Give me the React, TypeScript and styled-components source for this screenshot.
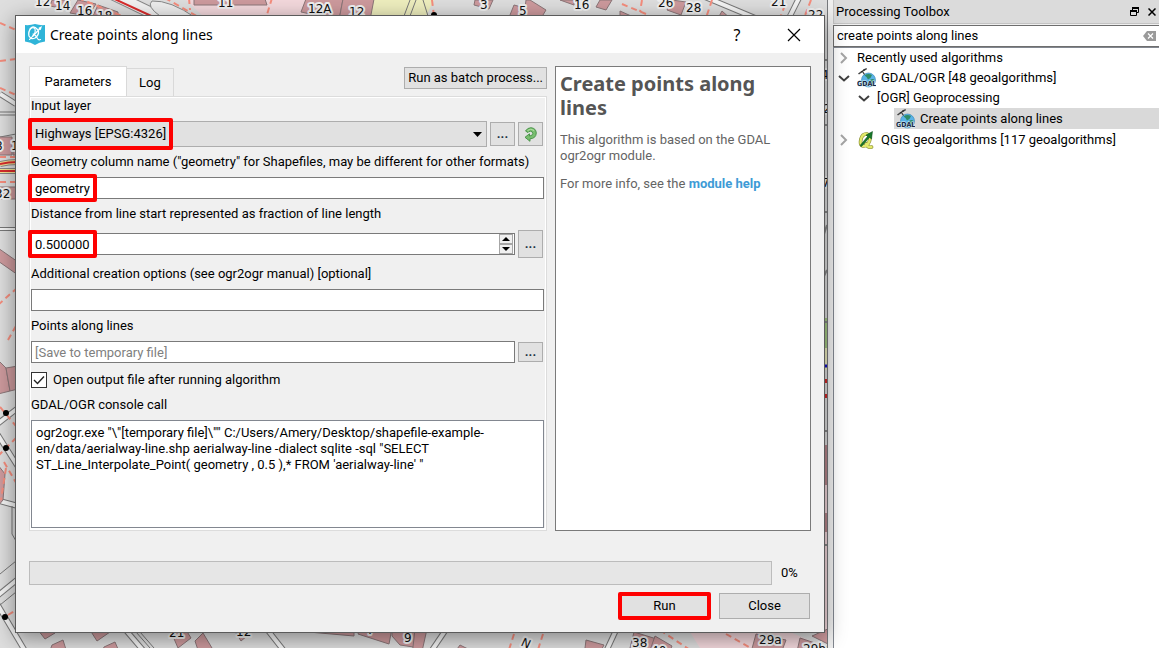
import React from "react";
import styled, { createGlobalStyle, css } from "styled-components";

const uiFont = `Roboto, "DejaVu Sans Condensed", sans-serif`;
const titleFont = `"Noto Sans", "Open Sans", sans-serif`;

const GlobalStyle = createGlobalStyle`
  *, *::before, *::after { box-sizing: border-box; }
  body { margin: 0; font: 13px/16px ${uiFont}; color: #000; background: #dcdcdc; }
  button, input, select, textarea { font: inherit; color: inherit; margin: 0; border-radius: 0; }
`;

const Workspace = styled.div`
  display: flex;
  height: 100vh;
  overflow: hidden;
`;

const MapPane = styled.main`
  position: relative;
  z-index: 1;
  flex: 1;
  min-width: 0;
  border-right: 1px solid #77797c;
`;

const MapCanvas = styled.svg`
  display: block;
  width: 100%;
  height: 100%;
`;

const MapLabel = styled.text`
  font: 12px "DejaVu Sans", sans-serif;
  fill: #111;
  stroke: #f0f0f0;
  stroke-width: 4px;
  stroke-linejoin: round;
  paint-order: stroke;
`;

const Dialog = styled.section`
  position: absolute;
  top: 15px;
  left: 15px;
  right: 2px;
  border: 1px solid #5b5b5b;
  background: #f0f0f0;
  box-shadow: 0 5px 20px rgba(0, 0, 0, 0.42);
`;

const TitleBar = styled.header`
  display: flex;
  align-items: center;
  height: 37px;
  padding: 0 9px;
  background: #fff;
`;

const DialogTitle = styled.h1`
  flex: 1;
  margin: 0 0 0 5px;
  font: 14px/20px ${titleFont};
`;

const CaptionButton = styled.button`
  display: grid;
  place-items: center;
  width: 42px;
  height: 36px;
  padding: 0;
  border: 0;
  background: none;
  font: 16px/20px ${titleFont};
  & + & { margin-left: 15px; }
`;

const DialogBody = styled.form`
  padding: 13px;
`;

const Columns = styled.div`
  display: grid;
  grid-template-columns: minmax(0, 518fr) minmax(0, 256fr);
  gap: 8px;
`;

const TabColumn = styled.div`
  display: flex;
  flex-direction: column;
`;

const TabRow = styled.div`
  display: flex;
  align-items: flex-end;
  height: 30px;
`;

const Tab = styled.button<{ $active?: boolean }>`
  height: ${(p) => (p.$active ? 30 : 28)}px;
  min-width: ${(p) => (p.$active ? 98 : 46)}px;
  padding: 0 12px;
  border: 1px solid #d9d9d9;
  border-bottom: 0;
  background: ${(p) => (p.$active ? "#fff" : "#f0f0f0")};
  & + & { border-left: 0; }
`;

const Push = css`
  border: 1px solid #adadad;
  background: #e1e1e1;
  padding: 0;
`;

const BatchButton = styled.button`
  ${Push}
  align-self: flex-start;
  height: 22px;
  margin: 1px 0 0 auto;
  padding: 0 3px;
`;

const TabPane = styled.div`
  flex: 1;
  padding: 1px 1px 2px;
  border: 1px solid #dcdcdc;
  background: #fff;
`;

const Fields = styled.div`
  display: flex;
  flex-direction: column;
  gap: 7px;
  padding-right: 1px;
  background: #f0f0f0;
`;

const FieldLabel = styled.label`
  height: 16px;
  white-space: nowrap;
`;

const FieldRow = styled.div<{ $height: number }>`
  display: flex;
  align-items: center;
  gap: 3px;
  height: ${(p) => p.$height}px;
`;

const Control = styled.div`
  position: relative;
  flex: 1;
  display: flex;
`;

const TextInput = styled.input`
  width: 100%;
  height: 22px;
  padding: 0 3px;
  border: 1px solid #7a7a7a;
  background: #fff;
  outline: 0;
  appearance: textfield;
  &::placeholder { color: #808080; opacity: 1; }
  &::-webkit-inner-spin-button { appearance: none; margin: 0; }
`;

const Select = styled.select`
  width: 100%;
  height: 26px;
  padding: 0 3px;
  border: 1px solid #adadad;
  background: #e1e1e1;
  appearance: none;
`;

const Caret = styled.svg`
  position: absolute;
  right: 5px;
  top: 11px;
  pointer-events: none;
`;

const SpinButtons = styled.div`
  position: absolute;
  top: 1px;
  right: 2px;
  display: grid;
`;

const SpinButton = styled.button`
  display: grid;
  place-items: center;
  width: 14px;
  height: 10px;
  padding: 0;
  border: 1px solid #a6a6a6;
  background: #f0f0f0;
`;

const ToolButton = styled.button<{ $height: number }>`
  ${Push}
  display: grid;
  place-items: center;
  flex: none;
  width: 25px;
  height: ${(p) => p.$height}px;
  font-weight: bold;
  color: #1c3344;
  &:last-child { margin-right: 1px; }
`;

const Highlight = styled.span<{ $width: number }>`
  position: absolute;
  top: -3px;
  bottom: -3px;
  left: -3px;
  width: ${(p) => p.$width}px;
  border: 4px solid #fe0000;
  border-radius: 2px;
  pointer-events: none;
`;

const CheckRow = styled.label`
  display: flex;
  align-items: center;
  gap: 6px;
  height: 20px;
`;

const Checkbox = styled.input`
  width: 16px;
  height: 16px;
  margin: 0;
  border: 1px solid #333;
  background: #fff;
  appearance: none;
`;

const CheckBoxFrame = styled.span`
  position: relative;
  display: flex;
  svg { position: absolute; inset: 0; }
`;

const Console = styled.textarea`
  display: block;
  width: 100%;
  height: 108px;
  padding: 4px;
  border: 1px solid #828790;
  background: #fff;
  resize: none;
  outline: 0;
`;

const Help = styled.article`
  border: 1px solid #7a7a7a;
  background: #fff;
  padding: 5px 4px;
  color: #646464;
  h2 { margin: 0 0 12px; font: bold 20px/24px ${titleFont}; color: #555; }
  p { margin: 0 0 12px; }
  a { color: #3e9bd6; font-weight: bold; text-decoration: none; }
`;

const ProgressRow = styled.div`
  display: grid;
  grid-template-columns: 1fr 30px;
  align-items: center;
  gap: 9px;
  margin-top: 30px;
`;

const Track = styled.div`
  height: 24px;
  border: 1px solid #bcbcbc;
  background: #e6e6e6;
`;

const Actions = styled.div`
  display: flex;
  justify-content: flex-end;
  gap: 9px;
  padding: 8px 1px 0;
`;

const ActionSlot = styled.div`
  position: relative;
`;

const ActionButton = styled.button`
  ${Push}
  width: 91px;
  height: 26px;
`;

const ActionHighlight = styled.span`
  position: absolute;
  inset: -1px;
  border: 4px solid #fe0000;
  border-radius: 2px;
  pointer-events: none;
`;

const Splitter = styled.div`
  width: 5px;
  background: #f0f0f0;
`;

const Toolbox = styled.aside`
  display: flex;
  flex-direction: column;
  width: 326px;
  background: #fff;
`;

const ToolboxHeader = styled.header`
  display: flex;
  align-items: center;
  gap: 9px;
  height: 24px;
  padding: 0 3px 0 2px;
  border: 1px solid #c3c3c3;
  border-top: 0;
  border-right: 0;
  background: #dbdbdb;
  h2 { flex: 1; margin: 0; font-size: 13px; font-weight: normal; line-height: 16px; }
`;

const DockButton = styled.button`
  display: grid;
  padding: 0;
  border: 0;
  background: none;
`;

const SearchBox = styled.div`
  position: relative;
  display: flex;
  height: 23px;
  padding-top: 1px;
  background: #f0f0f0;
`;

const SearchInput = styled.input`
  flex: 1;
  padding: 0 3px;
  border: 1px solid #6e6e6e;
  border-right: 0;
  background: #fff;
  outline: 0;
`;

const ClearButton = styled(DockButton)`
  position: absolute;
  top: 7px;
  right: 3px;
`;

const Tree = styled.ul`
  flex: 1;
  margin: 0;
  padding: 0;
  border-left: 1px solid #828790;
  border-top: 1px solid #828790;
  list-style: none;
`;

const TreeRow = styled.li<{ $indent: number; $height?: number }>`
  display: flex;
  align-items: center;
  height: ${(p) => p.$height ?? 20}px;
  padding-left: ${(p) => p.$indent}px;
  white-space: nowrap;
`;

const Twisty = styled.svg`
  flex: none;
  margin-right: 5px;
`;

const TreeItem = styled.span<{ $selected?: boolean }>`
  display: flex;
  align-items: center;
  align-self: stretch;
  flex: 1;
  gap: 5px;
  padding-left: 2px;
  background: ${(p) => (p.$selected ? "#d9d9d9" : "transparent")};
`;

const houseNumbers: [string, number, number][] = [
  ["12", 35, 6], ["14", 55, 10], ["16", 77, 15], ["18", 97, 20], ["11", 218, 7], ["12A", 308, 13], ["12", 349, 16],
  ["3", 480, 9], ["5", 519, 15], ["16", 574, 9], ["26", 658, 7], ["28", 686, 12], ["21", 771, 6], ["22", 808, 19],
  ["8", -5, 150], ["1", 11, 150], ["32", -5, 198], ["7", 822, 187], ["4", 821, 79], ["2", 823, 113],
  ["21", 169, 637], ["12", 236, 636], ["7", 367, 634], ["9", 404, 642], ["38", 632, 647], ["40", 651, 655], ["29a", 759, 644], ["29b", 803, 653],
];

const streets = [
  "M0 94L16 104", "M705 -3L760 20", "M800 -4L788 20",
  "M-4 425L18 408", "M-4 432L20 470", "M-4 500L18 506", "M-4 597L18 579", "M-4 602L28 656",
  "M124 628L148 656", "M266 628L288 656", "M447 628L428 656", "M617 628L604 656", "M528 644L520 656",
];

const buildings = [
  "M78 0L70 13L88 16L96 4z", "M52 0L50 6L66 9L70 0z", "M98 5L92 18H118L118 12z",
  "M194 -1V5H267L265 -1z", "M306 -1L301 12L339 20L343 -1z", "M343 -1L339 20H370L374 -1z",
  "M475 0L474 5L489 9L493 0z", "M514 5L508 20H540L546 10L530 0H526L525 8z", "M560 0L574 5V0z", "M600 0L596 7L606 10L612 0z",
  "M672 0L667 10L681 15L686 2z", "M722 11L716 22L732 20z", "M620 11L640 20H620z",
  "M-2 137H12V155H-2z", "M13 140H20V155H13z", "M-2 187H18V199H-2z", "M-2 248L18 262V275L-2 261z",
  "M-2 360L6 368L10 391L-2 394z", "M6 368L18 366V389L10 391z", "M-2 465L5 474L3 500L-2 506z",
  "M38 630L45 639L55 633z", "M90 630L97 641L110 632z", "M52 645L63 640L68 656H48z", "M104 647L115 642L121 656H100z",
  "M172 634L186 630L191 638L178 648z", "M195 641L203 633L212 648L200 656z", "M236 633L241 641L247 636z",
  "M286 630L354 636V628z", "M358 634L389 644L392 628H360z", "M392 636L400 645L420 648V628H392z",
  "M415 629H427L421 656H412z", "M460 645L482 656H452z", "M586 640L604 645L598 656H584z", "M634 632L660 640L650 656H628z",
  "M655 636L672 646L668 656H648z", "M756 634L786 640L780 656H750z", "M800 638L830 648V656H796z", "M812 636L830 628V645z",
];

const footpaths = [
  "M78 -2L132 20", "M165 -2L200 18", "M189 -2L190 10", "M272 -2L266 18", "M432 0L434 16", "M0 23L16 30", "M0 61L16 59",
  "M0 88L16 95", "M0 157H16", "M0 182H16", "M-2 305L16 289", "M8 340L16 326", "M0 407L16 426", "M-2 456L16 438", "M6 468L1 500",
  "M4 462L18 486", "M8 615L16 610", "M622 4L646 14", "M642 0L640 12", "M712 0L706 18", "M785 5L780 18", "M811 0L804 18",
  "M514 634L507 656", "M543 634L536 656", "M660 630L690 650", "M726 634L765 656",
];

const MapArt = () => (
  <MapCanvas viewBox="0 0 827 648" preserveAspectRatio="xMinYMin slice" aria-label="City map">
    <rect width="827" height="648" fill="#dedede" />
    <path d="M186 0H372L366 18H205z M690 632H790L827 648H700z M806 632H827V460H806z" fill="#f3d8dc" />
    <path d="M372 0H434L425 18H366z M812 348H827V370H812z" fill="#eeeebe" />
    <path d="M812 318H827V348H812z" fill="#a5cb84" />
    <g fill="none">
      {streets.map((d) => <path key={d} d={d} stroke="#777" strokeWidth="6" />)}
      {streets.map((d) => <path key={d} d={d} stroke="#f4f4f4" strokeWidth="4" />)}
      <path d="M112 -6L166 20" stroke="#888" strokeWidth="12" />
      <path d="M112 -6L166 20" stroke="#f2f2f2" strokeWidth="10" />
      <path d="M108 -4L160 20" stroke="#d82c2c" strokeWidth="2" />
      <path d="M196 18Q170 0 152 1Q146 6 160 16" fill="#eee" stroke="#888" />
      <path d="M0 164Q8 162 18 162M0 171H18" stroke="#888" strokeWidth="6" />
      <path d="M0 164Q8 162 18 162M0 171H18" stroke="#f3e493" strokeWidth="4" />
      <path d="M0 164Q8 162 18 162M0 171H18" stroke="#d82c2c" strokeWidth="2" />
      <path d="M0 229H16" stroke="#777" strokeWidth="4" />
      <path d="M0 229H16" stroke="#f4f4f4" strokeWidth="2" />
      <path d="M0 112H16M0 115H16M0 137L16 134M0 574L16 561M0 605L16 592M136 632L150 648M140 632L154 648M12 506V534L16 541M410 0L404 16M416 0L410 16M423 0L428 16" stroke="#777" />
      <path d="M822 60H827M822 125H827M822 212H827M822 322H827M822 431H827M822 545H827M827 225L822 240M827 270L822 280" stroke="#888" strokeWidth="2" />
      <path d="M822 366H827" stroke="#1111c8" strokeWidth="3" />
      <path d="M822 381H827M822 396H827" stroke="#d52828" strokeWidth="4" />
    </g>
    {buildings.map((d) => <path key={d} d={d} fill="#cd9a9d" stroke="#8b7678" />)}
    <path d="M822 445H827V485H822z M822 513H827V532H822z" fill="#b9878c" />
    <g fill="none" stroke="#f58d7d" strokeWidth="2" strokeDasharray="6 4">
      {footpaths.map((d) => <path key={d} d={d} />)}
    </g>
    <g fill="#000">
      <circle cx="6" cy="413" r="3" /><circle cx="6" cy="448" r="3" /><circle cx="5" cy="617" r="3" /><circle cx="434" cy="15" r="3" />
    </g>
    {houseNumbers.map(([t, x, y]) => <MapLabel key={t + x} x={x} y={y}>{t}</MapLabel>)}
    <MapLabel transform="translate(532 641) rotate(-155)">N</MapLabel>
  </MapCanvas>
);

const QgisBadge = () => (
  <svg width="20" height="21" viewBox="0 0 20 21" aria-hidden="true">
    <path d="M0 1Q5 1.500 10 0Q15 1.500 20 1V17.500Q14 18 10 21Q6 18 0 17.500z" fill="#2fb4d8" />
    <g fill="none" stroke="#fff" strokeLinecap="round">
      <path d="M12.500 5.500Q9 1.500 6 4Q3 7.500 4 12Q6 16 10 14Q14 11 13.500 7.500" strokeWidth="1.300" />
      <path d="M5 5Q8 2.500 10 5Q11 8 8.500 11Q6.500 14 4.500 15.500M8 10Q11 11 12.500 14.500Q13.500 16.500 15.500 15.500" strokeWidth="1.100" />
      <path d="M8 12L15.500 4" strokeWidth="1.300" />
    </g>
    <path d="M17 2L15.700 6.300L13.300 4z" fill="#fff" />
  </svg>
);

const IconLabel = styled.text`
  font: bold 7px "DejaVu Sans Condensed", sans-serif;
  fill: #132944;
  stroke: #dcecf5;
  stroke-width: 1px;
  paint-order: stroke;
`;

const GdalIcon = () => (
  <svg width="19" height="20" viewBox="0 0 19 20" aria-hidden="true">
    <circle cx="11.500" cy="12" r="7" fill="#5ab2e6" stroke="#2f83b5" strokeWidth="0.600" />
    <path d="M7.500 7.500Q11 5 15 7L13.500 10L11 11.500L9.500 9zM13 12Q16 10 17.500 12L16 16L14 15z" fill="#2f8c68" />
    <path d="M1 5.500L4.500 3L5.500 4L2 6.500zM6 1.500L9.500 0L10 1.200L7 3z" fill="#444" />
    <path d="M4 4L8 1.500M5.500 3.500L7.500 6.500" stroke="#333" strokeWidth="1.200" />
    <IconLabel x="0" y="18">GDAL</IconLabel>
  </svg>
);

const QIcon = () => (
  <svg width="19" height="20" viewBox="0 0 19 20" aria-hidden="true">
    <g fill="none" strokeLinecap="round">
      <path d="M10 4Q5.500 3.500 4 9Q2.500 15.500 6 16Q10.500 16.500 12.500 11Q14 5 10 4M9 14Q11 18 14.500 17" stroke="#84892e" strokeWidth="3.600" />
      <path d="M10 4Q5.500 3.500 4 9Q2.500 15.500 6 16Q10.500 16.500 12.500 11Q14 5 10 4M9 14Q11 18 14.500 17" stroke="#e2e96b" strokeWidth="2.400" />
    </g>
    <path d="M3 15.500L10.500 6.500L9 5L15.500 1.500L14.500 9L12.500 7.500L4.500 16.500z" fill="#17772b" stroke="#0b4c18" strokeWidth="0.500" />
  </svg>
);

const IterateIcon = () => (
  <svg width="13" height="15" viewBox="0 0 13 15" aria-hidden="true">
    <path d="M1.500 4Q3.500 0.700 7 0.700Q12 1.200 12.300 6Q12 11.500 6 11.800V14.300L1 10.300L5.500 6.800V9Q8.600 8.800 8.800 6.500Q8.600 4.300 6.500 4.200Q4.800 4.200 4 5.600z" fill="#79be70" stroke="#438e43" strokeWidth="0.900" />
    <path d="M3.500 3.500Q7 0.800 10 3.500" fill="none" stroke="#b4e2a5" />
  </svg>
);

const Chevron = ({ open }: { open?: boolean }) => (
  <Twisty width="12" height="12" viewBox="0 0 12 12" aria-hidden="true">
    <path d={open ? "M1 4L6 8.500L11 4" : "M3 1L8 6L3 11"} fill="none" stroke={open ? "#404040" : "#a5a5a5"} strokeWidth="2" />
  </Twisty>
);

const consoleCall = `ogr2ogr.exe "\\"[temporary file]\\"" C:/Users/Amery/Desktop/shapefile-example-en/data/aerialway-line.shp aerialway-line -dialect sqlite -sql "SELECT ST_Line_Interpolate_Point( geometry , 0.5 ),* FROM 'aerialway-line' "`;

export default function App() {
  return (
    <Workspace>
      <GlobalStyle />
      <MapPane>
        <MapArt />
        <Dialog role="dialog" aria-labelledby="dialog-title">
          <TitleBar>
            <QgisBadge />
            <DialogTitle id="dialog-title">Create points along lines</DialogTitle>
            <CaptionButton type="button" aria-label="Help">?</CaptionButton>
            <CaptionButton type="button" aria-label="Close window">
              <svg width="14" height="14" viewBox="0 0 14 14"><path d="M1 1L13 13M13 1L1 13" stroke="#000" strokeWidth="1.200" /></svg>
            </CaptionButton>
          </TitleBar>
          <DialogBody onSubmit={(e) => e.preventDefault()}>
            <Columns>
              <TabColumn>
                <TabRow>
                  <Tab type="button" $active>Parameters</Tab>
                  <Tab type="button">Log</Tab>
                  <BatchButton type="button">Run as batch process...</BatchButton>
                </TabRow>
                <TabPane>
                  <Fields>
                    <FieldLabel htmlFor="layer">Input layer</FieldLabel>
                    <FieldRow $height={26}>
                      <Control>
                        <Select id="layer"><option>Highways [EPSG:4326]</option></Select>
                        <Caret width="9" height="5" viewBox="0 0 9 5"><path d="M0 0H9L4.500 5z" /></Caret>
                        <Highlight $width={145} />
                      </Control>
                      <ToolButton type="button" $height={24} aria-label="Browse input layer">...</ToolButton>
                      <ToolButton type="button" $height={24} aria-label="Iterate over this layer"><IterateIcon /></ToolButton>
                    </FieldRow>
                    <FieldLabel htmlFor="column">Geometry column name ("geometry" for Shapefiles, may be different for other formats)</FieldLabel>
                    <Control>
                      <TextInput id="column" defaultValue="geometry" />
                      <Highlight $width={69} />
                    </Control>
                    <FieldLabel htmlFor="distance">Distance from line start represented as fraction of line length</FieldLabel>
                    <FieldRow $height={30}>
                      <Control>
                        <TextInput id="distance" type="number" step="any" defaultValue="0.500000" />
                        <SpinButtons>
                          <SpinButton type="button" aria-label="Increase"><svg width="8" height="4" viewBox="0 0 8 4"><path d="M0 4H8L4 0z" /></svg></SpinButton>
                          <SpinButton type="button" aria-label="Decrease"><svg width="8" height="4" viewBox="0 0 8 4"><path d="M0 0H8L4 4z" /></svg></SpinButton>
                        </SpinButtons>
                        <Highlight $width={69} />
                      </Control>
                      <ToolButton type="button" $height={28} aria-label="Set distance">...</ToolButton>
                    </FieldRow>
                    <FieldLabel htmlFor="options">Additional creation options (see ogr2ogr manual) [optional]</FieldLabel>
                    <Control><TextInput id="options" /></Control>
                    <FieldLabel htmlFor="output">Points along lines</FieldLabel>
                    <FieldRow $height={22}>
                      <Control><TextInput id="output" placeholder="[Save to temporary file]" /></Control>
                      <ToolButton type="button" $height={20} aria-label="Browse output file">...</ToolButton>
                    </FieldRow>
                    <CheckRow>
                      <CheckBoxFrame>
                        <Checkbox type="checkbox" defaultChecked />
                        <svg width="16" height="16" viewBox="0 0 16 16" aria-hidden="true"><path d="M3 8L6.500 11.500L13 4.500" fill="none" stroke="#222" strokeWidth="1.400" /></svg>
                      </CheckBoxFrame>
                      Open output file after running algorithm
                    </CheckRow>
                    <FieldLabel htmlFor="console">GDAL/OGR console call</FieldLabel>
                    <Console id="console" readOnly spellCheck={false} defaultValue={consoleCall} />
                  </Fields>
                </TabPane>
              </TabColumn>
              <Help>
                <h2>Create points along lines</h2>
                <p>This algorithm is based on the GDAL ogr2ogr module.</p>
                <p>For more info, see the <a href="#help">module help</a></p>
              </Help>
            </Columns>
            <ProgressRow>
              <Track role="progressbar" aria-valuenow={0} aria-label="Progress" />
              <span>0%</span>
            </ProgressRow>
            <Actions>
              <ActionSlot><ActionButton type="submit">Run</ActionButton><ActionHighlight /></ActionSlot>
              <ActionSlot><ActionButton type="button">Close</ActionButton></ActionSlot>
            </Actions>
          </DialogBody>
        </Dialog>
      </MapPane>
      <Splitter />
      <Toolbox>
        <ToolboxHeader>
          <h2>Processing Toolbox</h2>
          <DockButton type="button" aria-label="Float panel">
            <svg width="9" height="9" viewBox="0 0 9 9" fill="none" stroke="#000"><path d="M2.500 3V1H8.500V5.500H6.500" /><path d="M2 1H9" strokeWidth="2" /><path d="M0.500 4H6.500V8.500H0.500z" /><path d="M0 4H7" strokeWidth="2" /></svg>
          </DockButton>
          <DockButton type="button" aria-label="Close panel">
            <svg width="8" height="8" viewBox="0 0 8 8"><path d="M0.500 0.500L7.500 7.500M7.500 0.500L0.500 7.500" stroke="#000" strokeWidth="1.500" /></svg>
          </DockButton>
        </ToolboxHeader>
        <SearchBox>
          <SearchInput aria-label="Search algorithms" defaultValue="create points along lines" />
          <ClearButton type="button" aria-label="Clear search">
            <svg width="13" height="10" viewBox="0 0 13 10"><path d="M0 5L4 0H13V10H4z" fill="#9a9a9a" /><path d="M5 2.500L10 7.500M10 2.500L5 7.500" stroke="#fff" strokeWidth="1.200" /></svg>
          </ClearButton>
        </SearchBox>
        <Tree>
          <TreeRow $indent={4}><Chevron /><TreeItem>Recently used algorithms</TreeItem></TreeRow>
          <TreeRow $indent={4}><Chevron open /><TreeItem><GdalIcon />GDAL/OGR [48 geoalgorithms]</TreeItem></TreeRow>
          <TreeRow $indent={24}><Chevron open /><TreeItem>[OGR] Geoprocessing</TreeItem></TreeRow>
          <TreeRow $indent={60} $height={21}><TreeItem $selected><GdalIcon />Create points along lines</TreeItem></TreeRow>
          <TreeRow $indent={4} $height={22}><Chevron /><TreeItem><QIcon />QGIS geoalgorithms [117 geoalgorithms]</TreeItem></TreeRow>
        </Tree>
      </Toolbox>
    </Workspace>
  );
}
